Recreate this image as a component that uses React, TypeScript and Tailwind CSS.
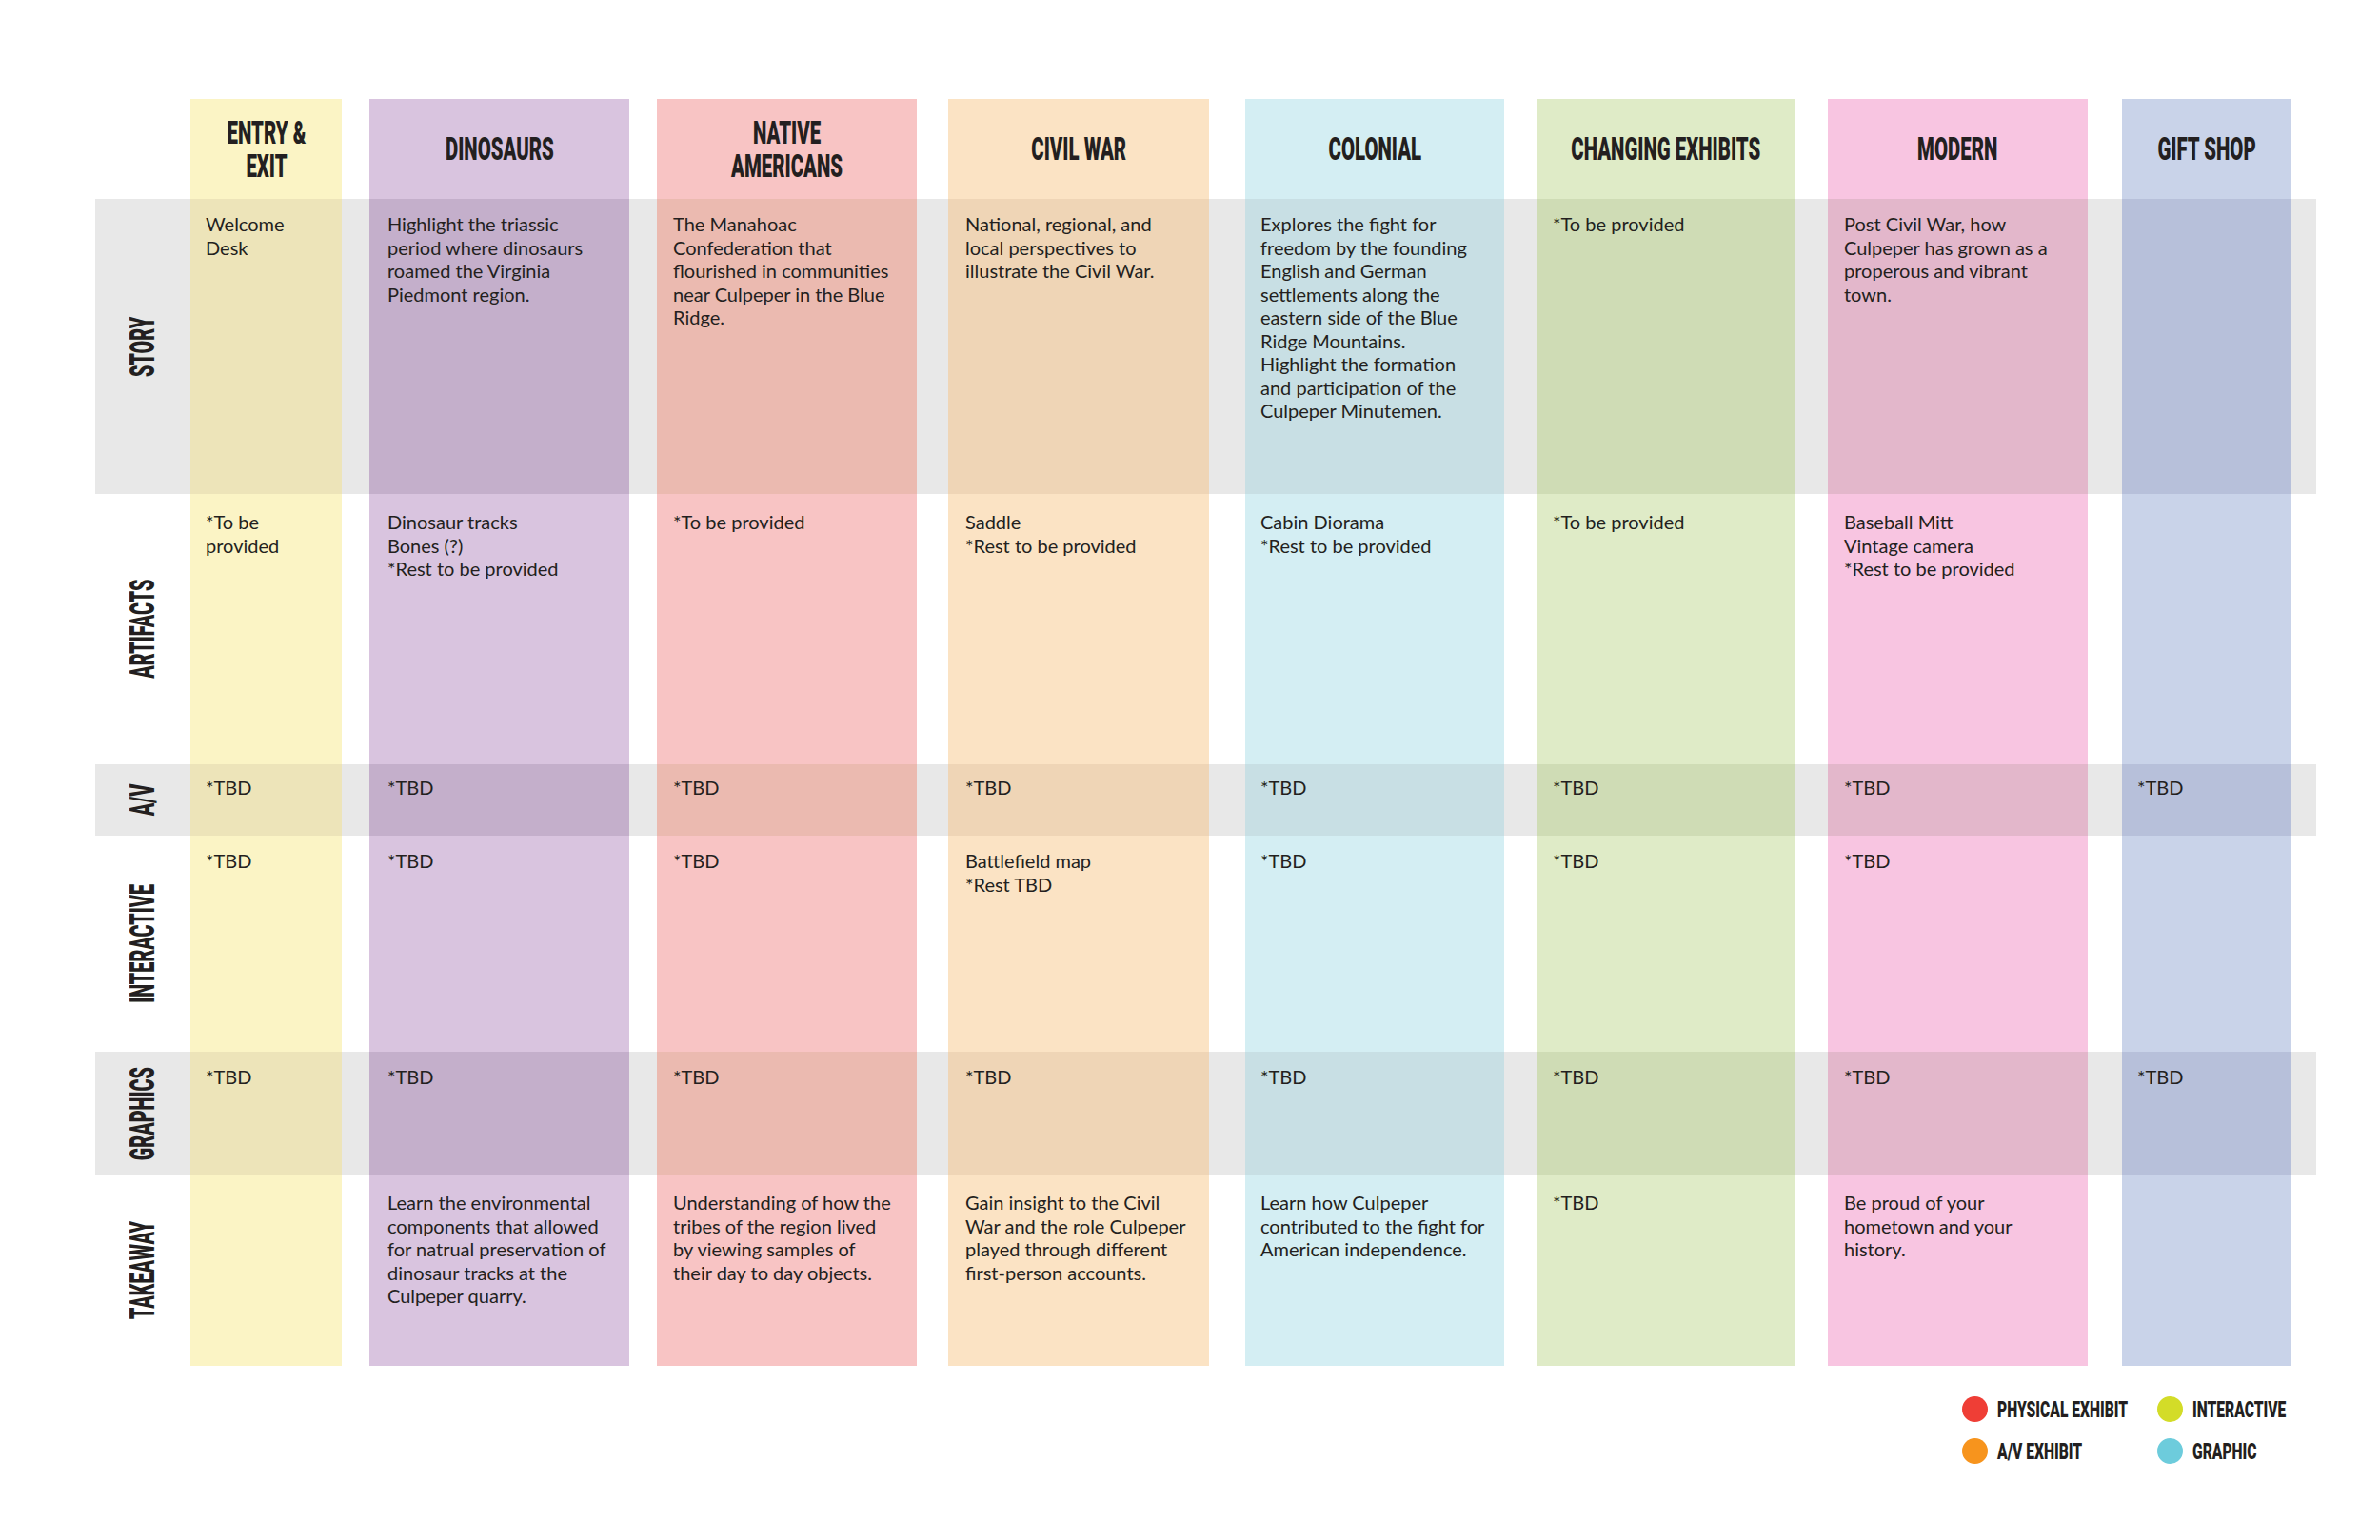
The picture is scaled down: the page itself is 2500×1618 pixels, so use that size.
import React from 'react';

type Col = {
  title: string[];
  box: string;
  base: string;
  dark: string;
  pad: string;
};

// column geometry + colours (base on white rows, dark on the grey bands)
const COLS: Col[] = [
  { title: ['ENTRY &', 'EXIT'], box: 'ml-0 w-[159px]', base: 'bg-[#fbf4c5]', dark: 'bg-[#ede4b9]', pad: 'pl-[16px]' },
  { title: ['DINOSAURS'], box: 'ml-[29px] w-[273px]', base: 'bg-[#d9c4df]', dark: 'bg-[#c4afcb]', pad: 'pl-[19px]' },
  { title: ['NATIVE', 'AMERICANS'], box: 'ml-[29px] w-[273px]', base: 'bg-[#f8c4c4]', dark: 'bg-[#ebbab0]', pad: 'pl-[17px]' },
  { title: ['CIVIL WAR'], box: 'ml-[33px] w-[274px]', base: 'bg-[#fbe3c4]', dark: 'bg-[#efd5b6]', pad: 'pl-[18px]' },
  { title: ['COLONIAL'], box: 'ml-[38px] w-[272px]', base: 'bg-[#d4eef3]', dark: 'bg-[#c8dfe4]', pad: 'pl-[16px]' },
  { title: ['CHANGING EXHIBITS'], box: 'ml-[34px] w-[272px]', base: 'bg-[#dfebc7]', dark: 'bg-[#cfdcb5]', pad: 'pl-[17px]' },
  { title: ['MODERN'], box: 'ml-[34px] w-[273px]', base: 'bg-[#f8c5e1]', dark: 'bg-[#e3b7cb]', pad: 'pl-[17px]' },
  { title: ['GIFT SHOP'], box: 'ml-[36px] w-[178px]', base: 'bg-[#c9d3e9]', dark: 'bg-[#b7c0da]', pad: 'pl-[16px]' },
];

type Row = {
  label: string;
  h: string;
  gray: boolean;
  pt: string;
  cells: string[][];
};

const ROWS: Row[] = [
  {
    label: 'STORY',
    h: 'h-[310px]',
    gray: true,
    pt: 'pt-[14px]',
    cells: [
      ['Welcome', 'Desk'],
      ['Highlight the triassic', 'period where dinosaurs', 'roamed the Virginia', 'Piedmont region.'],
      ['The Manahoac', 'Confederation that', 'flourished in communities', 'near Culpeper in the Blue', 'Ridge.'],
      ['National, regional, and', 'local perspectives to', 'illustrate the Civil War.'],
      [
        'Explores the fight for',
        'freedom by the founding',
        'English and German',
        'settlements along the',
        'eastern side of the Blue',
        'Ridge Mountains.',
        'Highlight the formation',
        'and participation of the',
        'Culpeper Minutemen.',
      ],
      ['*To be provided'],
      ['Post Civil War, how', 'Culpeper has grown as a', 'properous and vibrant', 'town.'],
      [],
    ],
  },
  {
    label: 'ARTIFACTS',
    h: 'h-[284px]',
    gray: false,
    pt: 'pt-[17px]',
    cells: [
      ['*To be', 'provided'],
      ['Dinosaur tracks', 'Bones (?)', '*Rest to be provided'],
      ['*To be provided'],
      ['Saddle', '*Rest to be provided'],
      ['Cabin Diorama', '*Rest to be provided'],
      ['*To be provided'],
      ['Baseball Mitt', 'Vintage camera', '*Rest to be provided'],
      [],
    ],
  },
  {
    label: 'A/V',
    h: 'h-[75px]',
    gray: true,
    pt: 'pt-[12px]',
    cells: [['*TBD'], ['*TBD'], ['*TBD'], ['*TBD'], ['*TBD'], ['*TBD'], ['*TBD'], ['*TBD']],
  },
  {
    label: 'INTERACTIVE',
    h: 'h-[227px]',
    gray: false,
    pt: 'pt-[14px]',
    cells: [['*TBD'], ['*TBD'], ['*TBD'], ['Battlefield map', '*Rest TBD'], ['*TBD'], ['*TBD'], ['*TBD'], []],
  },
  {
    label: 'GRAPHICS',
    h: 'h-[130px]',
    gray: true,
    pt: 'pt-[14px]',
    cells: [['*TBD'], ['*TBD'], ['*TBD'], ['*TBD'], ['*TBD'], ['*TBD'], ['*TBD'], ['*TBD']],
  },
  {
    label: 'TAKEAWAY',
    h: 'h-[200px]',
    gray: false,
    pt: 'pt-[16px]',
    cells: [
      [],
      ['Learn the environmental', 'components that allowed', 'for natrual preservation of', 'dinosaur tracks at the', 'Culpeper quarry.'],
      ['Understanding of how the', 'tribes of the region lived', 'by viewing samples of', 'their day to day objects.'],
      ['Gain insight to the Civil', 'War and the role Culpeper', 'played through different', 'first-person accounts.'],
      ['Learn how Culpeper', 'contributed to the fight for', 'American independence.'],
      ['*TBD'],
      ['Be proud of your', 'hometown and your', 'history.'],
      [],
    ],
  },
];

const LEGEND = [
  { label: 'PHYSICAL EXHIBIT', dot: 'bg-[#ef3e36]' },
  { label: 'INTERACTIVE', dot: 'bg-[#d3dc28]' },
  { label: 'A/V EXHIBIT', dot: 'bg-[#f7941d]' },
  { label: 'GRAPHIC', dot: 'bg-[#6dccdc]' },
];

const Lines: React.FC<{ lines: string[] }> = ({ lines }) => (
  <>
    {lines.map((l, i) => (
      <div key={i} className="whitespace-nowrap">
        {l}
      </div>
    ))}
  </>
);

export default function App() {
  return (
    <div className="w-[2500px] h-[1618px] bg-white text-[#231f20] overflow-hidden">
      <div className="ml-[100px] pt-[104px] w-[2333px]">
        {/* column headers */}
        <div className="flex h-[105px]">
          <div className="w-[100px] shrink-0" />
          {COLS.map((c) => (
            <div key={c.title.join()} className={`${c.box} ${c.base} shrink-0 flex items-center justify-center`}>
              <div className="whitespace-nowrap text-center scale-x-60 [font-family:Roboto,sans-serif] font-black text-[34px] leading-[35px]">
                {c.title.map((t) => (
                  <div key={t}>{t}</div>
                ))}
              </div>
            </div>
          ))}
        </div>

        {ROWS.map((r) => (
          <div key={r.label} className={`flex ${r.h} ${r.gray ? 'bg-[#e8e8e8]' : ''}`}>
            <div className="w-[100px] shrink-0 flex items-center justify-center">
              <div className="whitespace-nowrap [writing-mode:vertical-rl] rotate-180 scale-y-55 [font-family:Roboto,sans-serif] font-black text-[36px] leading-none">
                {r.label}
              </div>
            </div>
            {COLS.map((c, i) => (
              <div
                key={c.title.join()}
                className={`${c.box} ${r.gray ? c.dark : c.base} ${c.pad} ${r.pt} shrink-0 [font-family:Lato,sans-serif] text-[20px] leading-[24.5px]`}
              >
                <Lines lines={r.cells[i]} />
              </div>
            ))}
          </div>
        ))}
      </div>

      {/* legend */}
      <div className="ml-[2061px] mt-[32px] grid grid-cols-[205px_200px] gap-y-[17px]">
        {LEGEND.map((l) => (
          <div key={l.label} className="flex items-center gap-[10px] h-[27px]">
            <span className={`w-[27px] h-[27px] rounded-full shrink-0 ${l.dot}`} />
            <span className="whitespace-nowrap origin-left scale-x-65 [font-family:Roboto,sans-serif] font-black text-[24px] leading-none">
              {l.label}
            </span>
          </div>
        ))}
      </div>
    </div>
  );
}
